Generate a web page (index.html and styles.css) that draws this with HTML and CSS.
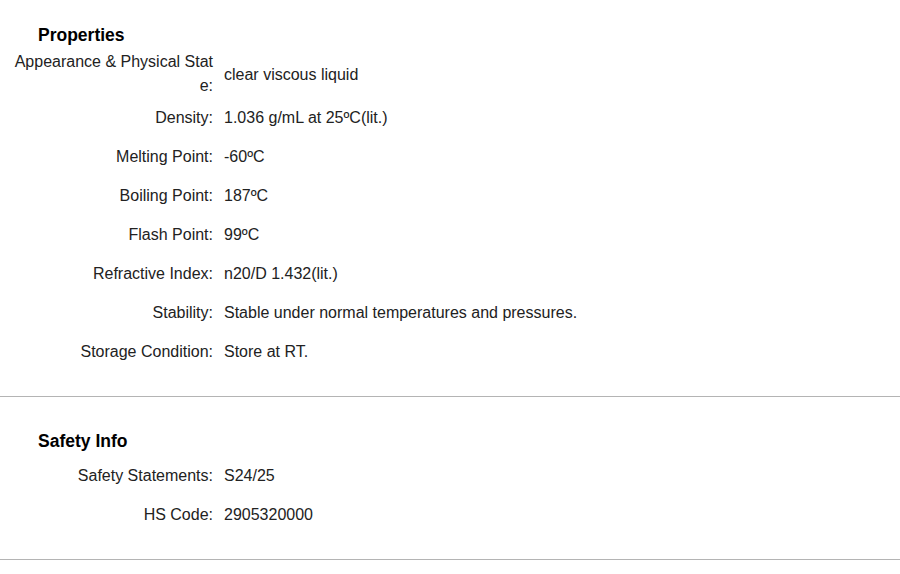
FILE: index.html
```html
<!DOCTYPE html>
<html lang="en">
<head>
<meta charset="utf-8">
<title>Properties</title>
<link rel="stylesheet" href="styles.css">
</head>
<body>
<section class="section section-first">
  <h2 class="section-title">Properties</h2>
  <div class="prop-list">
    <div class="prop-row"><div class="prop-label">Appearance &amp; Physical State:</div><div class="prop-value">clear viscous liquid</div></div>
    <div class="prop-row"><div class="prop-label">Density:</div><div class="prop-value">1.036 g/mL at 25ºC(lit.)</div></div>
    <div class="prop-row"><div class="prop-label">Melting Point:</div><div class="prop-value">-60ºC</div></div>
    <div class="prop-row"><div class="prop-label">Boiling Point:</div><div class="prop-value">187ºC</div></div>
    <div class="prop-row"><div class="prop-label">Flash Point:</div><div class="prop-value">99ºC</div></div>
    <div class="prop-row"><div class="prop-label">Refractive Index:</div><div class="prop-value">n20/D 1.432(lit.)</div></div>
    <div class="prop-row"><div class="prop-label">Stability:</div><div class="prop-value">Stable under normal temperatures and pressures.</div></div>
    <div class="prop-row"><div class="prop-label">Storage Condition:</div><div class="prop-value">Store at RT.</div></div>
  </div>
</section>
<section class="section section-second">
  <h2 class="section-title">Safety Info</h2>
  <div class="prop-list">
    <div class="prop-row"><div class="prop-label">Safety Statements:</div><div class="prop-value">S24/25</div></div>
    <div class="prop-row"><div class="prop-label">HS Code:</div><div class="prop-value">2905320000</div></div>
  </div>
</section>
</body>
</html>
```
FILE: styles.css
```css
html, body {
  margin: 0;
  padding: 0;
  background: #ffffff;
}

body {
  font-family: "Liberation Sans", Arial, sans-serif;
  font-size: 16px;
  color: #222222;
}

.section {
  border-bottom: 1px solid #b4b4b4;
}

.section-first {
  padding: 23px 0 25px;
}

.section-second {
  padding: 32px 0 25px;
}

.section-title {
  margin: 0 0 3px 38px;
  font-size: 17.5px;
  line-height: 24px;
  font-weight: bold;
  color: #000000;
}

.prop-row {
  display: grid;
  grid-template-columns: 205px 1fr;
  column-gap: 11px;
  align-items: center;
  padding-left: 8px;
  min-height: 39px;
}

.prop-label {
  text-align: right;
  line-height: 24px;
  word-break: break-all;
}

.prop-value {
  line-height: 39px;
}
```
